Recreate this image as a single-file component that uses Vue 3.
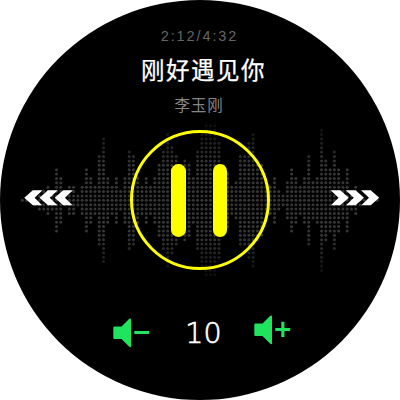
<script setup>
const levels = [
  0, 0, 0, 1, 2, 2, 3, 2, 7, 5,
  1, 3, 3, 1, 3, 7, 5, 3, 10, 14,
  5, 3, 5, 2, 5, 11, 10, 5, 3, 5,
  3, 5, 8, 11, 15, 12, 10, 8, 9, 8,
  5, 11, 15, 18, 17, 18, 13, 8, 6, 3,
  4, 10, 10, 13, 15, 9, 8, 4, 3, 5,
  2, 1, 4, 7, 5, 3, 5, 10, 4, 5,
  16, 9, 7, 11, 7, 4, 7, 2, 3, 1,
  0, 0, 0, 0
]
const dots = levels.flatMap((n, i) =>
  Array.from({ length: n * 2 + 1 }, (_, k) => {
    const row = k - n
    return {
      key: `${i}:${row}`,
      x: 22.3 + 4.275 * i,
      y: 78.3 + 4.38 * row,
      o: Math.abs(row) < 9 ? 1 : Math.max(0.2, 1 - (Math.abs(row) - 8) * 0.08)
    }
  })
)
</script>

<template>
  <main class="watch">
    <header class="track">
      <div class="time">2:12/4:32</div>
      <h1 class="title">刚好遇见你</h1>
      <div class="artist">李玉刚</div>
    </header>

    <section class="player">
      <svg class="wave" viewBox="0 0 400 156" aria-hidden="true">
        <circle v-for="d in dots" :key="d.key" :cx="d.x" :cy="d.y" r="1.5" fill="#363636" :opacity="d.o" />
      </svg>
      <button class="skip previous" aria-label="previous">
        <svg width="50" height="18" viewBox="0 0 50 18">
          <path v-for="i in 3" :key="i" :transform="`translate(${(i - 1) * 15.2} 0)`" d="M.3 8.8 8.8 1.2h9.7L10.5 8.8l7.7 7.4H8.8Z" />
        </svg>
      </button>
      <button class="pause" aria-label="pause"><span></span><span></span></button>
      <button class="skip next" aria-label="next">
        <svg width="50" height="18" viewBox="0 0 50 18">
          <path v-for="i in 3" :key="i" :transform="`translate(${(i - 1) * 15.2} 0)`" d="M18.8 8.8 10.3 1.2H.6L8.6 8.8.9 16.2h9.4Z" />
        </svg>
      </button>
    </section>

    <footer class="volume">
      <button class="down" aria-label="volume down">
        <svg width="38" height="30" viewBox="0 0 38 30">
          <path d="M1.5 8.5h7L16.3.8Q18 0 18 1.5v26.8q0 1.5-1.7.5L8.5 21h-7Q.3 21 .3 19.8V9.7Q.3 8.5 1.5 8.5ZM21.3 13h14.9v3.1H21.3Z" />
        </svg>
      </button>
      <span class="level">10</span>
      <button class="up" aria-label="volume up">
        <svg width="38" height="30" viewBox="0 0 38 30">
          <path d="M1.5 8.5h7L16.3.8Q18 0 18 1.5v26.8q0 1.5-1.7.5L8.5 21h-7Q.3 21 .3 19.8V9.7Q.3 8.5 1.5 8.5ZM21.3 13h6V6.8h3.1V13h5.8v3.1h-5.8v6h-3.1v-6h-6Z" />
        </svg>
      </button>
    </footer>
  </main>
</template>

<style>
body { margin: 0; background: #fff; }
</style>

<style scoped>
.watch {
  width: 400px;
  height: 400px;
  box-sizing: border-box;
  display: flex;
  flex-direction: column;
  border-radius: 50%;
  overflow: hidden;
  background: #000;
  color: #fff;
  font-family: "Noto Sans", "Noto Sans CJK SC", sans-serif;
}
button { padding: 0; border: 0; background: none; color: inherit; }
svg { display: block; }
.track {
  height: 122px;
  padding-top: 26px;
  box-sizing: border-box;
  display: flex;
  flex-direction: column;
  align-items: center;
}
.time {
  height: 20px;
  padding-right: 1px;
  line-height: 21px;
  font-family: "Liberation Sans", sans-serif;
  font-size: 14.5px;
  letter-spacing: 1.9px;
  color: #666;
}
.title {
  height: 36px;
  margin: 5px 0 0 7px;
  line-height: 36px;
  font-family: "Noto Sans CJK SC", sans-serif;
  font-size: 23.5px;
  font-weight: 400;
  letter-spacing: 1.5px;
  -webkit-text-stroke: 0.25px #fff;
}
.artist {
  height: 24px;
  margin: 5px 0 0;
  padding-right: 2px;
  line-height: 24px;
  font-family: "Noto Sans CJK SC", sans-serif;
  font-size: 15.5px;
  letter-spacing: 0.8px;
  color: #858585;
}
.player {
  height: 156px;
  display: grid;
  grid-template-columns: 1fr 140px 1fr;
  align-items: center;
  position: relative;
}
.wave { position: absolute; inset: 0; width: 400px; height: 156px; }
.skip { position: relative; margin-bottom: 5px; fill: #fff; }
.previous { justify-self: start; margin-left: 24px; }
.next { justify-self: end; margin-right: 20px; }
.pause {
  position: relative;
  width: 140px;
  height: 140px;
  padding: 0 1.6px 0 0;
  box-sizing: border-box;
  border: 3px solid #ff0;
  border-radius: 50%;
  display: flex;
  align-items: center;
  justify-content: center;
  gap: 27px;
}
.pause span { width: 14.6px; height: 73px; border-radius: 7.3px; background: #ff0; }
.volume {
  padding: 33px 108px 0 113px;
  display: flex;
  align-items: flex-start;
  justify-content: space-between;
  fill: #20e35e;
}
.down { padding-top: 7px; }
.up { padding-top: 4px; }
.level {
  padding: 2px 0 0 2px;
  line-height: 42px;
  font-family: "DejaVu Sans", sans-serif;
  font-size: 28.5px;
  font-weight: 200;
  -webkit-text-stroke: 0.7px #fff;
}
</style>
